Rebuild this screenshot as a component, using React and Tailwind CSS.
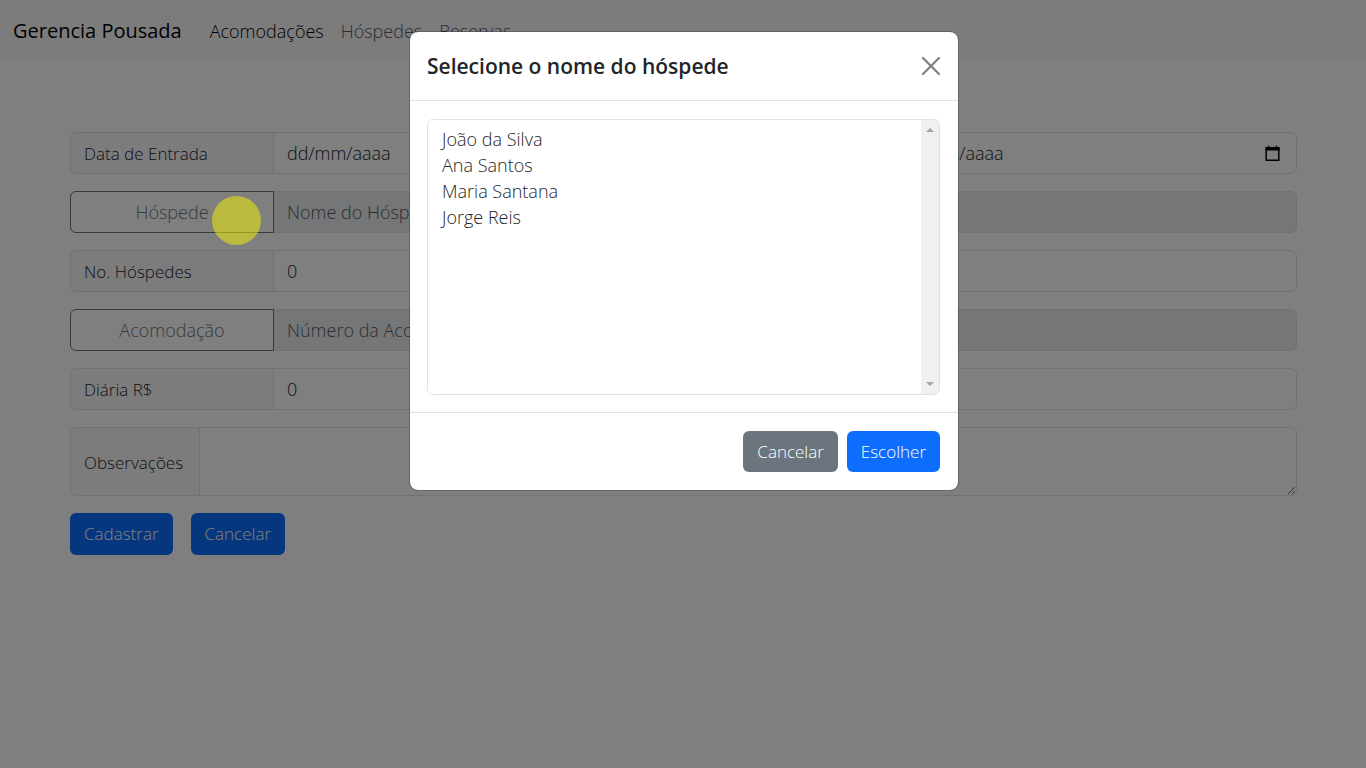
const label =
  'flex shrink-0 items-center border border-[#dee2e6] bg-[#f8f9fa] px-[13px] pt-[2px] text-[#212529]';
const input =
  'min-w-0 flex-1 border border-[#dee2e6] bg-white px-[13px] text-[18px] text-[#212529] placeholder:text-[#212529] -ml-px';
const row = 'flex h-[42px] w-full';
const picker =
  'relative w-[204px] shrink-0 rounded-l-md border border-[#6c757d] bg-white text-center text-[18px] text-[#6c757d]';
const readOnlyInput =
  'min-w-0 flex-1 rounded-r-md border border-[#dee2e6] bg-[#e9ecef] px-[13px] text-[18px] placeholder:text-[#595c5f] -ml-px';
const primary = 'h-[42px] rounded-md bg-[#0d6efd] px-[14px] text-white';
const option = 'h-[26px] p-0 px-[2px] text-[18px] font-light';

const guests = ['João da Silva', 'Ana Santos', 'Maria Santana', 'Jorge Reis'];

function CalendarIcon() {
  return (
    <svg width="15" height="17" viewBox="0 0 15 17" fill="none" aria-hidden="true">
      <path d="M1.2 3h12.6v12.3H1.2z" stroke="#000" strokeWidth="1.5" />
      <path d="M.5 2.2h14v3.4H.5zM2.8.8h1.5v2H2.8zM10.7.8h1.5v2h-1.5z" fill="#000" />
    </svg>
  );
}

function DateField({ id, last }) {
  return (
    <div
      className={
        last
          ? '-ml-px flex min-w-0 flex-1 items-center rounded-r-md border border-[#dee2e6] bg-white pr-[16px] text-[#212529]'
          : '-ml-px flex min-w-0 flex-1 items-center border border-[#dee2e6] bg-white pr-[16px] text-[#212529]'
      }
    >
      <input
        id={id}
        type="text"
        placeholder="dd/mm/aaaa"
        className="min-w-0 flex-1 bg-transparent px-[13px] text-[18px] placeholder:text-[#212529]"
      />
      <button type="button" aria-label="Abrir calendário">
        <CalendarIcon />
      </button>
    </div>
  );
}

export default function App() {
  return (
    <div className="relative min-h-screen overflow-hidden bg-white font-['Open_Sans','Noto_Sans',sans-serif] text-[17px] font-light leading-[26px] text-[#212529]">
      <nav className="flex h-[62px] items-center bg-[#f8f9fa] px-[13px]">
        <a href="#" className="mr-[28px] text-[20px] font-normal text-black">
          Gerencia Pousada
        </a>
        <div className="flex gap-[17px] text-[18px]">
          <a href="#acomodacoes" className="text-black">Acomodações</a>
          <a href="#hospedes" className="text-[#585a5c]">Hóspedes</a>
          <a href="#reservas" className="text-[#585a5c]">Reservas</a>
        </div>
      </nav>

      <form className="mx-[69px] ml-[70px] mt-[70px] flex flex-col gap-[17px]">
        <div className={row}>
          <label htmlFor="entrada" className={`${label} w-[204px] rounded-l-md`}>Data de Entrada</label>
          <DateField id="entrada" />
          <label htmlFor="saida" className={`${label} -ml-px w-[204px]`}>Data de Saída</label>
          <DateField id="saida" last />
        </div>
        <div className={row}>
          <button type="button" className={picker}>Hóspede</button>
          <input readOnly aria-label="Nome do Hóspede" placeholder="Nome do Hóspede" className={readOnlyInput} />
        </div>
        <div className={row}>
          <label htmlFor="numero" className={`${label} w-[204px] rounded-l-md`}>No. Hóspedes</label>
          <input id="numero" defaultValue="0" className={`${input} rounded-r-md`} />
        </div>
        <div className={row}>
          <button type="button" className={picker}>Acomodação</button>
          <input readOnly aria-label="Número da Acomodação" placeholder="Número da Acomodação" className={readOnlyInput} />
        </div>
        <div className={row}>
          <label htmlFor="diaria" className={`${label} w-[204px] rounded-l-md`}>Diária R$</label>
          <input id="diaria" defaultValue="0" className={`${input} rounded-r-md`} />
        </div>
        <div className="flex h-[69px]">
          <label htmlFor="obs" className={`${label} w-[130px] rounded-l-md`}>Observações</label>
          <textarea id="obs" className={`${input} resize rounded-r-md`} />
        </div>
        <div className="flex gap-[18px]">
          <button type="submit" className={primary}>Cadastrar</button>
          <button type="button" className={primary}>Cancelar</button>
        </div>
      </form>

      <div className="absolute inset-0 bg-black/50" />
      <div className="absolute left-[212px] top-[196px] size-[49px] rounded-full bg-[#f6f600]/50" />

      <div className="absolute inset-0 flex items-start justify-center pl-[2px] pt-[32px]">
        <div
          role="dialog"
          aria-labelledby="dialog-title"
          className="w-full max-w-[548px] rounded-lg bg-white outline outline-black/20"
        >
          <header className="flex h-[69px] items-center justify-between border-b border-[#dee2e6] px-[17px]">
            <h1 id="dialog-title" className="text-[21px] font-semibold">Selecione o nome do hóspede</h1>
            <button type="button" aria-label="Fechar">
              <svg width="20" height="20" viewBox="0 0 20 20" stroke="#7f7f7f" strokeWidth="2.2" strokeLinecap="round" aria-hidden="true">
                <path d="M2 2l16 16M18 2L2 18" />
              </svg>
            </button>
          </header>
          <div className="pb-[17px] pl-[17px] pr-[18px] pt-[18px]">
            <div className="flex h-[276px] overflow-hidden rounded-md border border-[#dee2e6]">
              <select
                size={10}
                aria-label="Hóspede"
                className="h-full min-w-0 flex-1 overflow-hidden bg-white px-[12px] py-[7px] outline-none"
              >
                {guests.map((name) => (
                  <option key={name} className={option}>{name}</option>
                ))}
              </select>
              <div aria-hidden="true" className="flex w-[18px] flex-col items-center justify-between bg-[#f0f0f0] py-[8px]">
                <svg width="8" height="4" viewBox="0 0 8 4" fill="#a3a3a3"><path d="M0 4l4-4 4 4z" /></svg>
                <svg width="8" height="4" viewBox="0 0 8 4" fill="#a3a3a3"><path d="M0 0l4 4 4-4z" /></svg>
              </div>
            </div>
          </div>
          <footer className="flex justify-end gap-[9px] border-t border-[#dee2e6] px-[18px] py-[18px]">
            <button type="button" className="h-[41px] rounded-md bg-[#6c757d] px-[14px] text-white">Cancelar</button>
            <button type="button" className="h-[41px] rounded-md bg-[#0d6efd] px-[14px] text-white">Escolher</button>
          </footer>
        </div>
      </div>
    </div>
  );
}
